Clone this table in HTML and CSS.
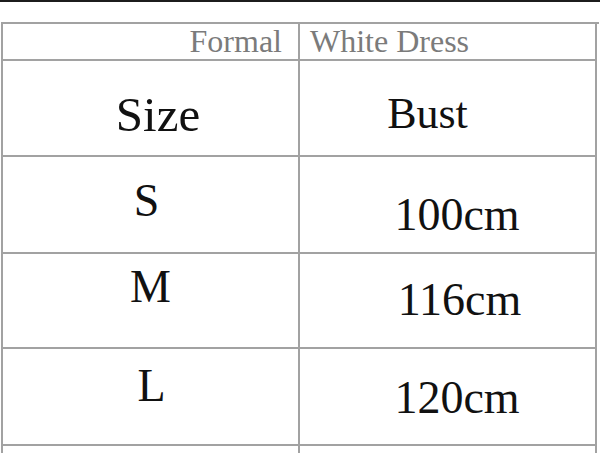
FILE: index.html
```html
<!DOCTYPE html>
<html lang="en">
<head>
<meta charset="utf-8">
<title>Formal White Dress – Size Chart</title>
<link rel="stylesheet" href="styles.css">
</head>
<body>
<div class="topbar"></div>
<div class="chart">
  <div class="cell title title-left">Formal</div>
  <div class="cell title title-right">White Dress</div>

  <div class="cell head head-size">Size</div>
  <div class="cell head head-bust">Bust</div>

  <div class="cell data size-s">S</div>
  <div class="cell data val-100">100cm</div>

  <div class="cell data size-m">M</div>
  <div class="cell data val-116">116cm</div>

  <div class="cell data size-l">L</div>
  <div class="cell data val-120">120cm</div>

  <div class="cell tail"></div>
  <div class="cell tail"></div>
</div>
</body>
</html>
```

FILE: styles.css
```css
html, body {
  margin: 0;
  padding: 0;
  background: #ffffff;
  overflow: hidden;
  height: 453px;
}

body {
  font-family: "Liberation Serif", "Times New Roman", serif;
  color: #111111;
}

.topbar {
  height: 2px;
  background: #1c1c1c;
}

.chart {
  display: grid;
  grid-template-columns: 297px 297px;
  grid-template-rows: 37px 96px 97px 95px 97px 20px;
  margin: 20px 0 0 1px;
  width: 596px;
  border-top: 2px solid #a2a2a2;
  border-left: 2px solid #a2a2a2;
}

.cell {
  border-right: 2px solid #a2a2a2;
  border-bottom: 2px solid #a2a2a2;
  white-space: nowrap;
}

.title {
  font-size: 32px;
  line-height: 32px;
  color: #7b7b7b;
  padding-top: 1px;
}

.title-left {
  text-align: right;
  padding-right: 16px;
}

.title-right {
  text-align: left;
  padding-left: 10px;
}

.head,
.data {
  font-size: 46px;
  line-height: 46px;
  text-align: center;
}

.head-size {
  font-size: 49px;
  line-height: 49px;
  padding-top: 29px;
  padding-left: 15px;
}

.head-bust {
  font-size: 44px;
  line-height: 44px;
  padding-top: 31px;
  padding-right: 40px;
}

.size-s {
  padding-top: 21px;
  padding-right: 8px;
}

.val-100 {
  padding-top: 35px;
  padding-left: 19px;
}

.size-m {
  padding-top: 10px;
}

.val-116 {
  padding-top: 23px;
  padding-left: 24px;
}

.size-l {
  padding-top: 14px;
  padding-left: 2px;
}

.val-120 {
  padding-top: 26px;
  padding-left: 19px;
}

.tail {
  border-bottom: none;
}
```
